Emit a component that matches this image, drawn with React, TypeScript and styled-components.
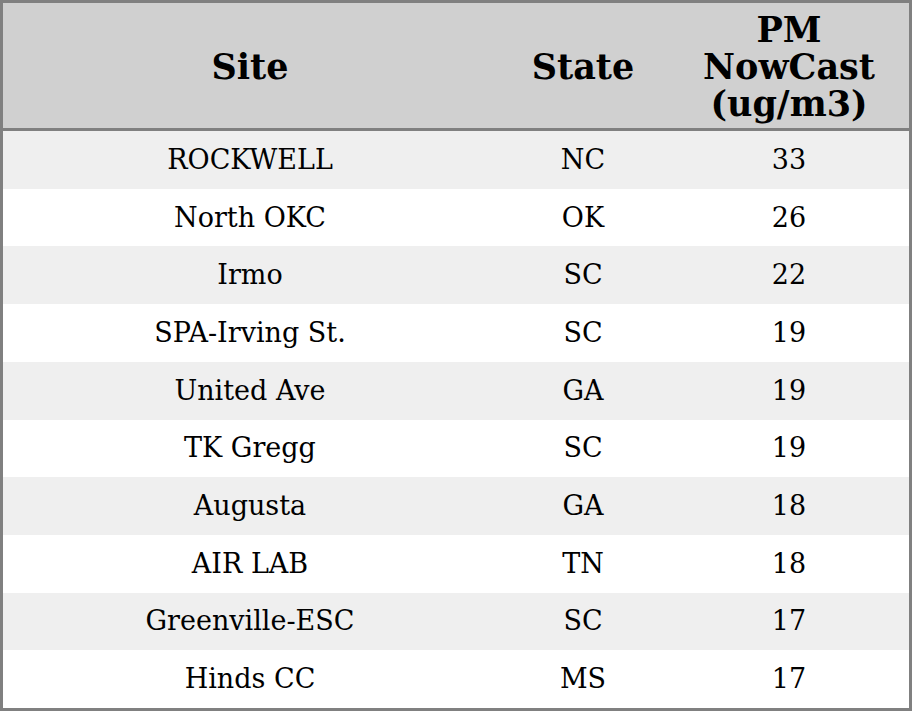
import React from "react";
import styled, { createGlobalStyle } from "styled-components";

const Global = createGlobalStyle`
  html, body { margin: 0; padding: 0; background: #ffffff; }
  * { box-sizing: border-box; }
`;

const Table = styled.div`
  display: grid;
  grid-template-columns: 494px 172px 1fr;
  grid-template-rows: auto repeat(10, 1fr);
  width: 912px;
  height: 711px;
  border: 3px solid #808080;
  font-family: "DejaVu Serif", serif;
  color: #000;
`;

const HeadCell = styled.div`
  background: #d0d0d0;
  border-bottom: 3px solid #808080;
  display: flex;
  align-items: center;
  justify-content: center;
  text-align: center;
  font-weight: bold;
  font-size: 35px;
  line-height: 37.3px;
  padding: 5px 0 3px;
  height: 128px;
`;

const Cell = styled.div<{ $shade: boolean }>`
  background: ${(p) => (p.$shade ? "#efefef" : "#ffffff")};
  display: flex;
  align-items: center;
  justify-content: center;
  font-size: 27px;
  line-height: 30px;
`;

const rows: [string, string, number][] = [
  ["ROCKWELL", "NC", 33],
  ["North OKC", "OK", 26],
  ["Irmo", "SC", 22],
  ["SPA-Irving St.", "SC", 19],
  ["United Ave", "GA", 19],
  ["TK Gregg", "SC", 19],
  ["Augusta", "GA", 18],
  ["AIR LAB", "TN", 18],
  ["Greenville-ESC", "SC", 17],
  ["Hinds CC", "MS", 17],
];

export default function App() {
  return (
    <>
      <Global />
      <Table>
        <HeadCell>Site</HeadCell>
        <HeadCell>State</HeadCell>
        <HeadCell>
          PM
          <br />
          NowCast
          <br />
          (ug/m3)
        </HeadCell>
        {rows.map(([site, st, v], i) => (
          <React.Fragment key={i}>
            <Cell $shade={i % 2 === 0}>{site}</Cell>
            <Cell $shade={i % 2 === 0}>{st}</Cell>
            <Cell $shade={i % 2 === 0}>{v}</Cell>
          </React.Fragment>
        ))}
      </Table>
    </>
  );
}
